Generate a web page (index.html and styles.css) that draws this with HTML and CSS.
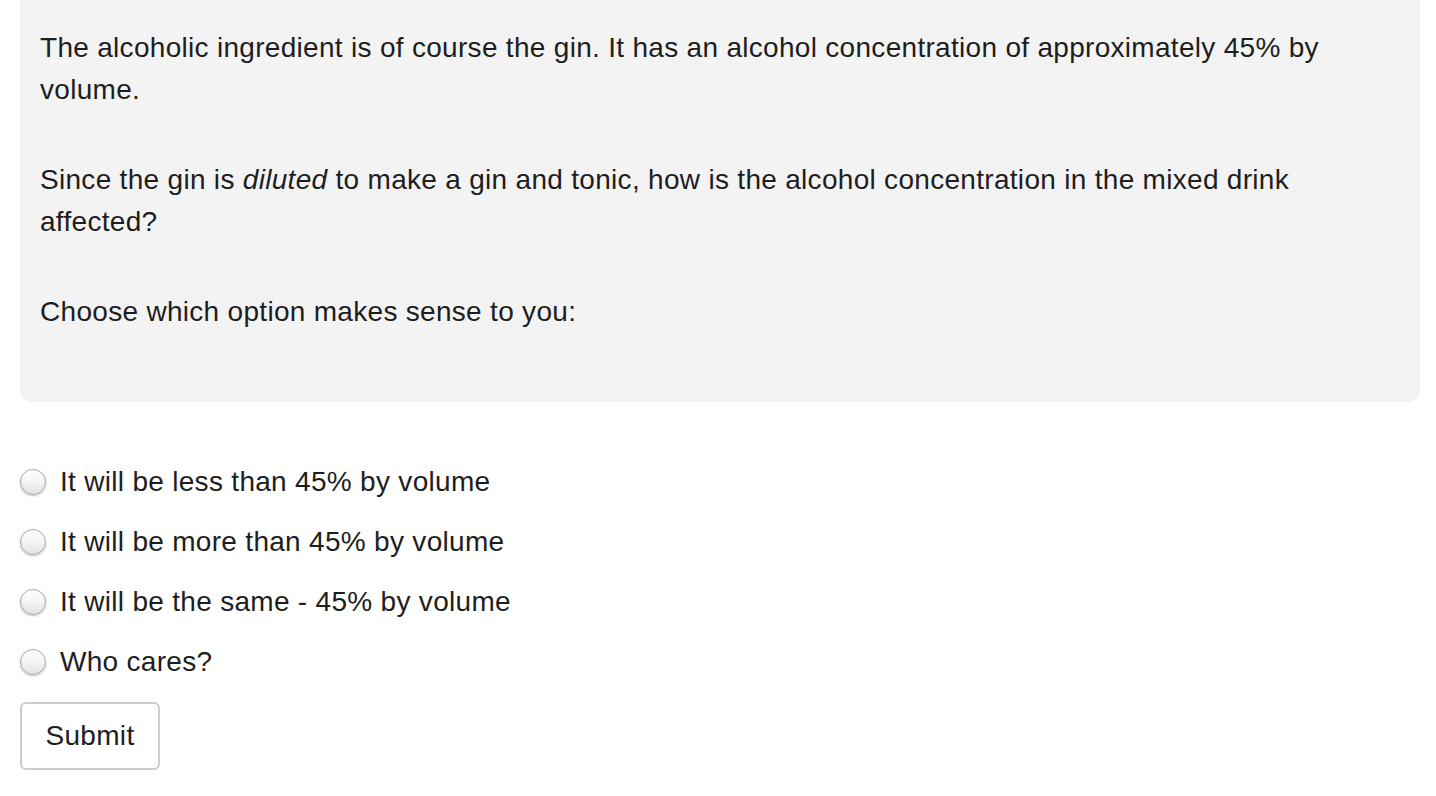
FILE: index.html
```html
<!DOCTYPE html>
<html>
<head>
<meta charset="utf-8">
<link rel="stylesheet" href="styles.css">
</head>
<body>
<div class="page">
  <div class="prompt">
    <p>The alcoholic ingredient is of course the gin. It has an alcohol concentration of approximately 45% by volume.</p>
    <p>Since the gin is <em>diluted</em> to make a gin and tonic, how is the alcohol concentration in the mixed drink affected?</p>
    <p>Choose which option makes sense to you:</p>
  </div>
  <form class="options">
    <label class="option"><input type="radio" name="a" class="radio"><span>It will be less than 45% by volume</span></label>
    <label class="option"><input type="radio" name="a" class="radio"><span>It will be more than 45% by volume</span></label>
    <label class="option"><input type="radio" name="a" class="radio"><span>It will be the same - 45% by volume</span></label>
    <label class="option"><input type="radio" name="a" class="radio"><span>Who cares?</span></label>
    <button type="button" class="submit">Submit</button>
  </form>
</div>
</body>
</html>
```
FILE: styles.css
```css
html, body {
  margin: 0;
  padding: 0;
  background: #fff;
}
body {
  font-family: "Liberation Sans", Arial, sans-serif;
  font-size: 28px;
  letter-spacing: 0.3px;
  line-height: 42px;
  color: #1e1e1e;
}
.page {
  padding: 0 16px 0 20px;
}
.prompt {
  background: #f3f3f3;
  border-radius: 0 0 12px 12px;
  padding: 27px 20px 21px 20px;
}
.prompt p {
  margin: 0 0 48px 0;
}
.options {
  display: flex;
  flex-direction: column;
  align-items: flex-start;
  padding-top: 50px;
}
.option {
  display: flex;
  align-items: center;
  height: 60px;
  gap: 14px;
}
.radio {
  appearance: none;
  -webkit-appearance: none;
  margin: 0;
  width: 26px;
  height: 26px;
  border-radius: 50%;
  border: 1px solid #a9a9a9;
  background: linear-gradient(#ffffff, #f4f4f4 50%, #e2e2e2);
  box-shadow: 0 1px 2px rgba(0,0,0,0.25);
  box-sizing: border-box;
}
.submit {
  margin-top: 10px;
  font-family: "Liberation Sans", Arial, sans-serif;
  font-size: 28px;
  letter-spacing: 0.3px;
  color: #1e1e1e;
  background: #fff;
  border: 2px solid #cccccc;
  border-radius: 6px;
  width: 140px;
  height: 68px;
  padding: 0;
}
```
